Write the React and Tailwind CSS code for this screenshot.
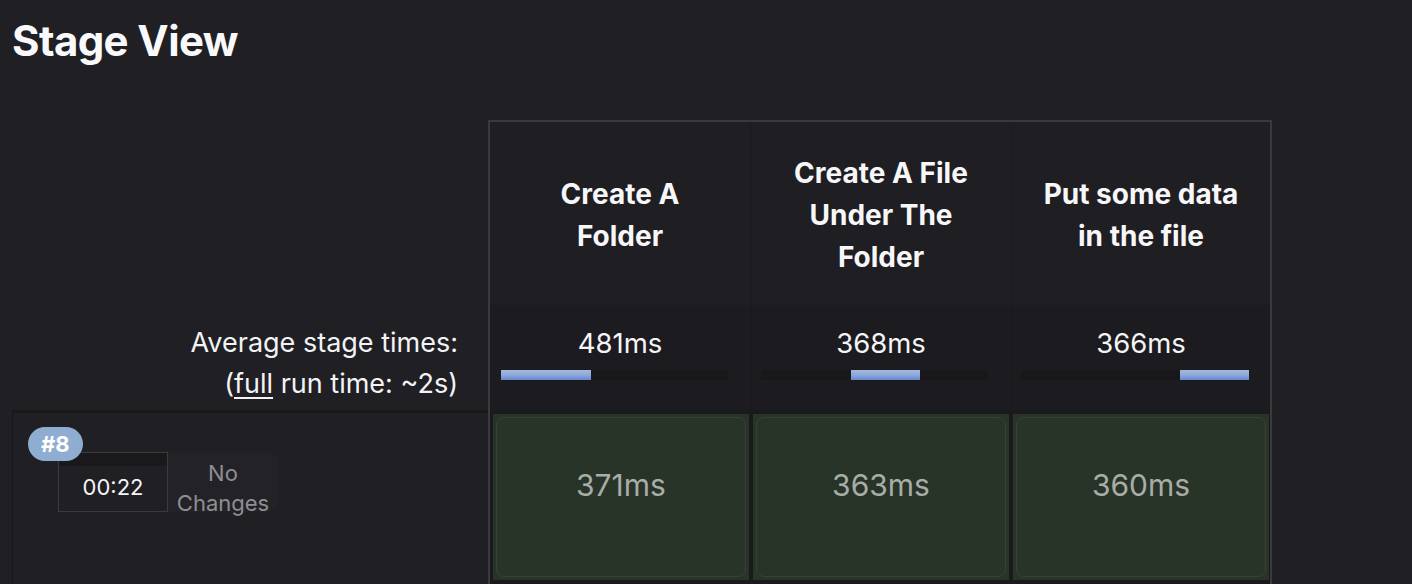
export default function App() {
  const stages = [
    { name: "Create A Folder", avg: "481ms", left: 0, width: 90, time: "371ms" },
    { name: "Create A File Under The Folder", avg: "368ms", left: 90, width: 69, time: "363ms" },
    { name: "Put some data in the file", avg: "366ms", left: 159, width: 69, time: "360ms" },
  ];
  return (
    <div
      className="w-full h-[584px] overflow-hidden bg-[#1f1f24] text-white"
      style={{ fontFamily: "Inter, 'Noto Sans', sans-serif" }}
    >
      <h2 className="pl-[12px] pt-[17px] text-[42px] leading-[48px] font-bold tracking-[-0.6px] text-[#f9f9fb]">
        Stage View
      </h2>
      <div className="flex mt-[55px]">
        {/* left column */}
        <div className="w-[488px] flex flex-col">
          <div className="h-[185px]" />
          <div className="h-[105px] flex flex-col items-end pt-[17px] pr-[30px] text-[27px] leading-[41px] text-[#f3f3f5]">
            <div>Average stage times:</div>
            <div>
              (<span className="underline underline-offset-[4px] decoration-[2px]">full</span> run time: ~2s)
            </div>
          </div>
          <div className="ml-[12px] h-[180px] border-t-[3px] border-l border-[#18181b] bg-[#1f1f24] relative">
            <div className="absolute left-[15px] top-[14px] z-10 h-[34px] px-[13px] rounded-full bg-[#8fadd0] text-[22px] font-bold leading-[34px] text-white">
              #8
            </div>
            <div className="ml-[45px] mt-[39px] flex h-[60px]">
              <div className="w-[110px] border border-[#3a3a40] bg-[#1f1f24] flex flex-col">
                <div className="h-[13px] bg-[#19191c]" />
                <div className="flex-1 flex items-center justify-center text-[22px] text-[#f5f5f7] pb-[2px]">
                  00:22
                </div>
              </div>
              <div className="w-[110px] rounded-r-[10px] bg-[#232327] flex flex-col items-center justify-center text-[22px] leading-[30px] text-[#8e8e93] pt-[12px]">
                <div>No</div>
                <div>Changes</div>
              </div>
            </div>
          </div>
        </div>
        {/* table */}
        <div className="w-[784px] border-t-2 border-x-2 border-[#39393e] flex flex-col">
          <div className="h-[183px] flex bg-[#1f1f23]">
            {stages.map((s, i) => (
              <div
                key={i}
                className={`w-[260px] flex items-center justify-center ${i > 0 ? "border-l-2 border-[#1d1d21]" : ""}`}
              >
                <div className="w-[204px] text-center text-[28px] leading-[42px] font-bold text-[#f7f7f9] pt-[2px]">
                  {s.name}
                </div>
              </div>
            ))}
          </div>
          <div className="h-[105px] flex bg-[#1c1c20]">
            {stages.map((s, i) => (
              <div
                key={i}
                className={`w-[260px] flex flex-col items-center pt-[22px] ${i > 0 ? "border-l-2 border-[#1a1a1e]" : ""}`}
              >
                <div className="text-[27.5px] leading-[32px] text-[#f5f5f7]">{s.avg}</div>
                <div className={`mt-[11px] ${i > 0 ? "ml-[9px]" : "ml-[11px]"} self-start w-[227px] h-[10px] bg-[#18181b] relative`}>
                  <div
                    className="absolute top-0 h-[10px] bg-gradient-to-b from-[#a3badf] via-[#8ea9da] to-[#6686cf]"
                    style={{ left: s.left + "px", width: s.width + "px" }}
                  />
                </div>
              </div>
            ))}
          </div>
          <div className="h-[180px] flex bg-[#1a1a1d] border-t-[4px] border-[#1a1a1d] gap-[4px] pl-[3px]">
            {stages.map((s, i) => (
              <div
                key={i}
                className="w-[256px] h-[166px] bg-[#283428] p-[3px]"
              >
                <div className="h-full rounded-[8px] border border-[#394039] flex items-center justify-center text-[30px] text-[#a8ada8] pb-[24px]">
                  {s.time}
                </div>
              </div>
            ))}
          </div>
        </div>
      </div>
    </div>
  );
}
